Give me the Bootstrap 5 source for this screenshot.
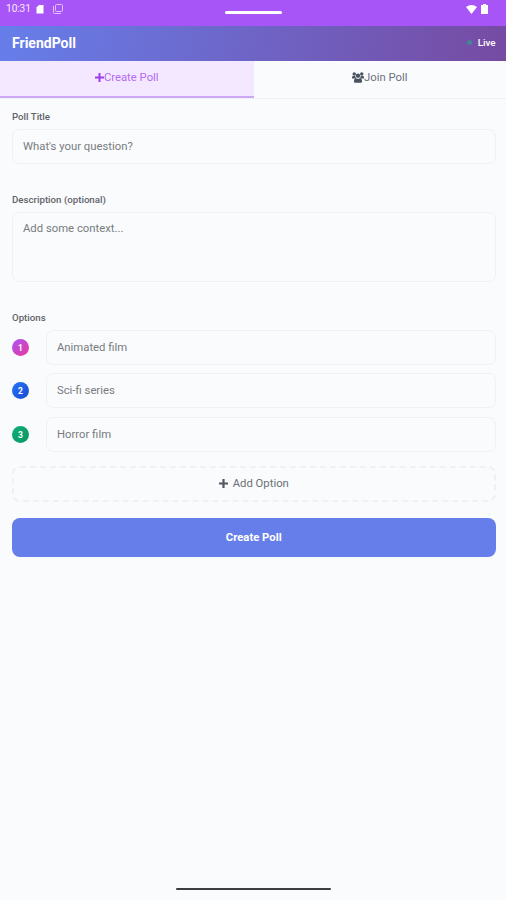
<!DOCTYPE html>
<html lang="en">
<head>
<meta charset="utf-8">
<meta name="viewport" content="width=device-width, initial-scale=1">
<title>FriendPoll</title>
<link href="https://cdn.jsdelivr.net/npm/bootstrap@5.3.0/dist/css/bootstrap.min.css" rel="stylesheet">
<style>
body{font-family:Roboto,"Liberation Sans",sans-serif;font-size:11px;line-height:16px;background:#fafbfd;color:#6f7378}
.screen{height:900px;overflow:hidden}
.status{height:26px;background:#a855f7;color:#f6e9ff;padding:0 18px 8px 6px;font-size:10.2px;letter-spacing:-.1px}
.grabber{left:225px;top:11px;width:57px;height:3px;background:#fff;border-radius:2px}
.app-head{height:35px;padding:0 10.5px 2px 12px;background:linear-gradient(100deg,#667eea,#764ba2);color:#fff}
.brand{font-size:14px;font-weight:700}
.live{font-size:9.8px;font-weight:500;gap:6px}
.dot{width:5px;height:5px;background:#3f8795;border-radius:50%}
.tabs{height:37.5px;border-bottom:1px solid #eff0f3}
.tabs button{border:0;background:#fafbfd;color:#6c7280;font-size:11.3px;font-weight:400;padding:0 0 3px}
.tabs button.on{width:253.5px;height:37px;background:#f3e8ff;color:#b36af2;border-bottom:2px solid #cda8f3;padding-bottom:2px}
.form-label{font-size:9.7px;line-height:14px;font-weight:500;color:#606369;margin:0 0 5px}
.form-control,.form-control:focus{background:#fafbfd;border:1px solid #f0f1f3;border-radius:7px;font-size:11.3px;line-height:16px;padding:0 10px;height:35px;resize:none}
textarea.form-control{height:70px;padding-top:8px}
.form-control::placeholder{color:#777b7f;opacity:1}
.main-form{padding:11px 10.5px 0 12px}
.second-label{margin-top:29px}
.options{gap:8.500px}
.num{width:17px;height:17px;border-radius:50%;font-size:8.5px;font-weight:700;color:#fff;padding-top:1px}
.opt-row{gap:17px}
.n1{background:linear-gradient(135deg,#a855f7,#ec3899)}
.n2{background:linear-gradient(135deg,#2878f5,#1648d4)}
.n3{background:linear-gradient(135deg,#10b077,#059664)}
.add{height:36px;border:2px dashed #f0f1f4;border-radius:8px;background:none;font-size:11.3px;color:#6c7075;gap:5px;margin-top:14px}
.create{height:39px;border:0;border-radius:8px;background:#667eea;color:#fff;font-size:11.3px;font-weight:700;margin-top:16.500px;padding:1px 0 0}
.home{bottom:10px;left:176px;width:155px;height:2px;background:#3d3d41;border-radius:1px}
</style>
<script src="https://cdn.jsdelivr.net/npm/bootstrap@5.3.0/dist/js/bootstrap.bundle.min.js"></script>
</head>
<body>
<div class="screen position-relative">
  <div class="status d-flex align-items-center justify-content-between">
    <div class="d-flex align-items-center">
      <span>10:31</span>
      <svg class="ms-1" width="10" height="10" viewBox="0 0 10 10"><path d="M4 1h4.500v8.500H1.500V3.500z" fill="#fff"/></svg>
      <svg class="ms-2" width="10" height="10" viewBox="0 0 10 10" fill="none" stroke="#e2c0fd"><rect x="2.500" y=".5" width="7" height="7" rx="1"/><path d="M.5 2v6.500q0 1 1 1H8"/></svg>
    </div>
    <div class="d-flex align-items-center gap-1">
      <svg width="11" height="9" viewBox="0 0 11 9"><path d="M0 2Q5.500-2 11 2L5.500 9z" fill="#fff"/></svg>
      <svg width="7" height="10" viewBox="0 0 7 10"><path d="M0 1h2V0h3v1h2v9H0z" fill="#fff"/></svg>
    </div>
  </div>
  <div class="grabber position-absolute"></div>
  <header class="app-head d-flex align-items-center justify-content-between">
    <span class="brand">FriendPoll</span>
    <span class="live d-flex align-items-center"><span class="dot"></span>Live</span>
  </header>
  <nav class="tabs d-flex">
    <button class="on d-flex align-items-center justify-content-center"><svg width="9" height="9" viewBox="0 0 9 9" stroke="#a03be8" stroke-width="2"><path d="M4.500 0v9M0 4.500h9"/></svg>Create Poll</button>
    <button class="flex-fill d-flex align-items-center justify-content-center"><svg width="12" height="11" viewBox="0 0 13 12" fill="#4b5260"><circle cx="2.400" cy="2.300" r="1.900"/><circle cx="10.600" cy="2.300" r="1.900"/><circle cx="6.500" cy="4" r="2.400"/><path d="M0 7V5.500q0-1.200 1.200-1.200h2.300Q3.500 6 4.500 6.700L3.800 7zM13 7V5.500q0-1.200-1.200-1.200H9.500Q9.500 6 8.500 6.700l.7.300zM2 10q0-3 2.500-3.200 2 1.200 4 0Q11 7 11 10q0 1.700-1.500 1.700h-6Q2 11.700 2 10z"/></svg>Join Poll</button>
  </nav>
  <main class="main-form">
    <label class="form-label d-block" for="title">Poll Title</label>
    <input id="title" class="form-control" placeholder="What's your question?">
    <label class="form-label second-label d-block" for="desc">Description (optional)</label>
    <textarea id="desc" class="form-control" placeholder="Add some context..."></textarea>
    <div class="form-label second-label">Options</div>
    <div class="options d-flex flex-column">
      <div class="opt-row d-flex align-items-center"><span class="num n1 d-flex flex-shrink-0 align-items-center justify-content-center">1</span><input class="form-control" placeholder="Animated film" aria-label="Option 1"></div>
      <div class="opt-row d-flex align-items-center"><span class="num n2 d-flex flex-shrink-0 align-items-center justify-content-center">2</span><input class="form-control" placeholder="Sci-fi series" aria-label="Option 2"></div>
      <div class="opt-row d-flex align-items-center"><span class="num n3 d-flex flex-shrink-0 align-items-center justify-content-center">3</span><input class="form-control" placeholder="Horror film" aria-label="Option 3"></div>
    </div>
    <button class="add w-100 d-flex align-items-center justify-content-center"><svg width="9" height="9" viewBox="0 0 9 9" stroke="#55585f" stroke-width="2.200"><path d="M4.500 0v9M0 4.500h9"/></svg>Add Option</button>
    <button class="create btn w-100">Create Poll</button>
  </main>
  <div class="home position-absolute"></div>
</div>
</body>
</html>
